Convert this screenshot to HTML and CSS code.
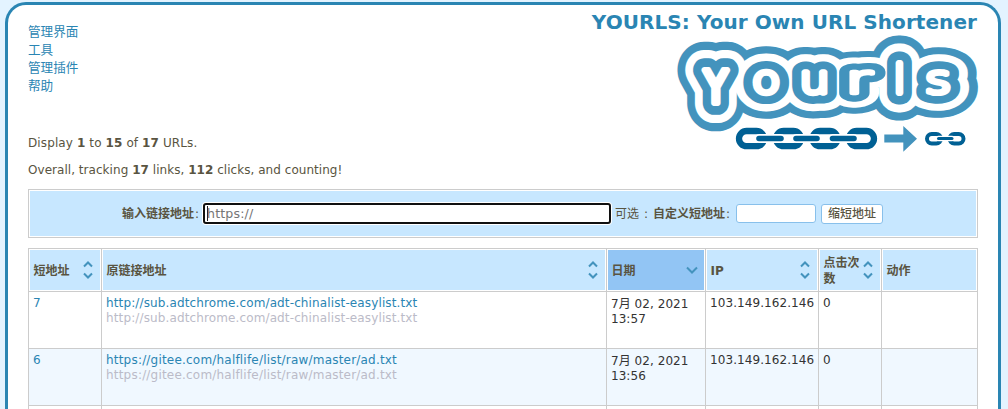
FILE: index.html
```
<!DOCTYPE html>
<html lang="zh-CN">
<head>
<meta charset="utf-8">
<title>YOURLS: Your Own URL Shortener</title>
<link rel="stylesheet" href="styles.css">
</head>
<body>
<svg width="0" height="0" class="sprites">
  <symbol id="sort" viewBox="0 0 10 20"><path d="M1 6.5 5 2.5 9 6.5M1 13.5 5 17.5 9 13.5" /></symbol>
  <symbol id="down" viewBox="0 0 12 8"><path d="M1 1.5 6 6.5 11 1.5" /></symbol>
</svg>
<div class="wrap">
  <header class="header">
    <ul class="menu">
      <li><a>管理界面</a></li>
      <li><a>工具</a></li>
      <li><a>管理插件</a></li>
      <li><a>帮助</a></li>
    </ul>
    <div class="brand">
      <h1>YOURLS: Your Own URL Shortener</h1>
      <svg class="logo" width="302" height="120" viewBox="677 33 302 120">
        <defs>
          <g id="word">
            <text class="cap" transform="translate(704.2 103) scale(.95 1)">y</text>
            <text transform="translate(752 92.5) scale(1.17 1)">o</text>
            <text transform="translate(799.6 92.5) scale(1.2 1)">u</text>
            <text transform="translate(845.8 93) scale(1.6 1)">r</text>
            <text transform="translate(893.9 93)">l</text>
            <text transform="translate(925.2 92.5) scale(1.25 1)">s</text>
          </g>
        </defs>
        <use href="#word" class="l1"/>
        <use href="#word" class="l2"/>
        <use href="#word" class="l3"/>
        <use href="#word" class="l4"/>
        <g class="links">
          <rect x="739" y="131" width="25" height="15.2" rx="7.6"/>
          <rect x="776" y="131" width="25" height="15.2" rx="7.6"/>
          <rect x="812.5" y="131" width="25" height="15.2" rx="7.6"/>
          <rect x="849" y="131" width="25" height="15.2" rx="7.6"/>
        </g>
        <path class="halo" d="M759 138.5H781M796 138.5H817M832.5 138.5H854"/>
        <path class="bar" d="M759 138.5H781M796 138.5H817M832.5 138.5H854"/>
        <path class="arrow" d="M884.3 134.5H903.3V126L917 138.8 903.3 151.7V142.5H884.3Z"/>
        <g class="links small">
          <rect x="927" y="134" width="14" height="9.4" rx="4.7"/>
          <rect x="949.5" y="134" width="14" height="9.4" rx="4.7"/>
        </g>
        <path class="halo small" d="M938.5 138.6H952"/>
        <path class="bar small" d="M938.5 138.6H952"/>
      </svg>
    </div>
  </header>
  <p class="stat first">Display <b>1</b> to <b>15</b> of <b>17</b> URLs.</p>
  <p class="stat">Overall, tracking <b>17</b> links, <b>112</b> clicks, and counting!</p>
  <form class="new-url">
    <b>输入链接地址</b><span class="colon">:</span>
    <span class="field url"><i></i>https://</span>
    <span class="opt">可选<em>:</em></span><b>自定义短地址</b><span class="colon">:</span>
    <span class="field keyword"></span>
    <button type="button">缩短地址</button>
  </form>
  <table class="urls">
    <colgroup><col class="c1"><col class="c2"><col class="c3"><col class="c4"><col class="c5"><col class="c6"></colgroup>
    <thead>
      <tr>
        <th><div>短地址<svg class="sort"><use href="#sort"/></svg></div></th>
        <th><div>原链接地址<svg class="sort"><use href="#sort"/></svg></div></th>
        <th class="active"><div>日期<svg class="down"><use href="#down"/></svg></div></th>
        <th><div>IP<svg class="sort"><use href="#sort"/></svg></div></th>
        <th><div><span>点击次数</span><svg class="sort"><use href="#sort"/></svg></div></th>
        <th><div>动作</div></th>
      </tr>
    </thead>
    <tbody>
      <tr>
        <td class="id"><a>7</a></td>
        <td class="long"><a>http://sub.adtchrome.com/adt-chinalist-easylist.txt</a><small>http://sub.adtchrome.com/adt-chinalist-easylist.txt</small></td>
        <td class="date">7月 02, 2021<br>13:57</td><td class="ip">103.149.162.146</td><td>0</td><td></td>
      </tr>
      <tr>
        <td class="id"><a>6</a></td>
        <td class="long"><a>https://gitee.com/halflife/list/raw/master/ad.txt</a><small>https://gitee.com/halflife/list/raw/master/ad.txt</small></td>
        <td class="date">7月 02, 2021<br>13:56</td><td class="ip">103.149.162.146</td><td>0</td><td></td>
      </tr>
      <tr class="next"><td></td><td></td><td></td><td></td><td></td><td></td></tr>
    </tbody>
  </table>
</div>
</body>
</html>
```
FILE: styles.css
```
* { box-sizing: border-box; }
html { height: 100%; overflow: hidden; }
body {
  display: flex;
  margin: 0;
  height: 100%;
  padding: 2px 0 0 5px;
  overflow: hidden;
  background: #e3f3ff;
  color: #595441;
  font: 12px/15px "DejaVu Sans", "Noto Sans CJK SC", sans-serif;
}
.sprites { display: none; }
.wrap {
  width: 996px;
  height: 407px;
  padding: 0 20px;
  overflow: hidden;
  background: #fff;
  border: 3px solid #2a85b3;
  border-bottom: 0;
  border-radius: 21px 21px 0 0;
}
.header { display: flex; justify-content: space-between; height: 129px; }
.menu {
  margin: 0;
  padding: 17px 0 0;
  list-style: none;
  font: 12.6px/18px "Noto Sans CJK SC", sans-serif;
}
a { color: #2a85b3; }
.brand { display: flex; flex-direction: column; align-items: flex-end; }
h1 {
  margin: 0 1px 0 0;
  height: 28px;
  padding-top: 5px;
  font-size: 20px;
  line-height: 24px;
  letter-spacing: .07px;
  color: #2a85b3;
  white-space: nowrap;
}
.logo { display: block; margin-right: -1px; overflow: visible; }
.logo text {
  font: 200 39.5px "DejaVu Sans", sans-serif;
  stroke-linejoin: round;
  stroke-linecap: round;
  vector-effect: non-scaling-stroke;
}
.logo .cap { text-transform: uppercase; font: 44px "DejaVu Sans Condensed", "DejaVu Sans", sans-serif; font-stretch: condensed; }
.l1 { fill: #4393bd; stroke: #4393bd; stroke-width: 55px; }
.l2 { fill: #fff; stroke: #fff; stroke-width: 39px; }
.l3 { fill: #4393bd; stroke: #4393bd; stroke-width: 23px; }
.l4 { fill: #fff; stroke: #fff; stroke-width: 5.8px; }
.links { fill: none; stroke: #006094; stroke-width: 6.3px; }
.halo { fill: none; stroke: #fff; stroke-width: 9px; stroke-linecap: round; }
.bar { fill: none; stroke: #006094; stroke-width: 5.6px; stroke-linecap: round; }
.arrow { fill: #4393bd; }
.links.small { stroke-width: 4px; }
.halo.small { stroke-width: 5.5px; }
.bar.small { stroke-width: 3px; }
.stat { margin: 0 0 12px; letter-spacing: .04px; }
.stat.first { margin-top: 2px; letter-spacing: .11px; }
.new-url {
  display: flex;
  align-items: center;
  height: 49px;
  margin: -1px 0 10px;
  padding-left: 93px;
  border: 1px solid #ccc;
  background: #c7e7ff;
  box-shadow: inset 0 0 0 1px #fff;
  white-space: nowrap;
}
.new-url b, .opt, .colon { padding-top: 1px; }
.colon { width: 9px; padding-left: 1px; }
.field {
  display: flex;
  align-items: center;
  background: #fff;
  border: 1px solid #88c0eb;
  border-radius: 3px;
}
.field.url {
  width: 408px;
  height: 21px;
  padding-left: 2px;
  border: 2px solid #101010;
  color: #757575;
  font-size: 12.6px;
  letter-spacing: .15px;
  box-shadow: 0 0 0 1px #fff;
}
.field.url i { width: 1px; height: 15px; margin-right: -1px; background: #222; }
.opt { margin-left: 4px; width: 38px; }
.opt em { margin-left: 5px; font-style: normal; }
.field.keyword { width: 80px; height: 19px; margin-left: 2px; }
button {
  width: 62px;
  height: 20px;
  margin-left: 5px;
  padding: 0;
  background: #fff;
  border: 1px solid #88c0eb;
  border-radius: 3px;
  color: #595441;
  font: 500 12px/16px "DejaVu Sans", "Noto Sans CJK SC", sans-serif;
}
.urls {
  width: 950px;
  table-layout: fixed;
  border-collapse: separate;
  border-spacing: 0;
  border: solid #ccc;
  border-width: 1px 0 0 1px;
}
.c1 { width: 73px; }
.c2 { width: 505px; }
.c3 { width: 99px; }
.c4 { width: 113px; }
.c5 { width: 63px; }
.c6 { width: 96px; }
th, td { border: solid #ccc; border-width: 0 1px 1px 0; }
th {
  height: 43px;
  padding: 2px 8px 0 4.5px;
  background: #c7e7ff;
  box-shadow: inset 0 0 0 1px #fff;
  text-align: left;
  line-height: 16px;
}
th.active { background: #92c5f4; padding-right: 7px; }
th div { display: flex; align-items: center; justify-content: space-between; }
th span { width: 37px; }
.sort, .down {
  flex: none;
  width: 10px;
  height: 20px;
  margin-top: -2px;
  fill: none;
  stroke: #4393bd;
  stroke-width: 2px;
}
.down { width: 12px; height: 8px; }
td { height: 57px; padding: 4px; vertical-align: top; color: #333; }
td.date { padding-top: 5px; letter-spacing: .05px; }
td.ip { letter-spacing: .08px; }
tbody tr:nth-child(2) { background: #f0f8ff; }
.next td { height: 3px; padding: 0; border-bottom: 0; }
.long a, small { display: block; font-size: 12px; letter-spacing: .125px; }
tr:nth-child(2) .long a, tr:nth-child(2) small { letter-spacing: .2px; }
small { color: #bbbbc8; }
```
